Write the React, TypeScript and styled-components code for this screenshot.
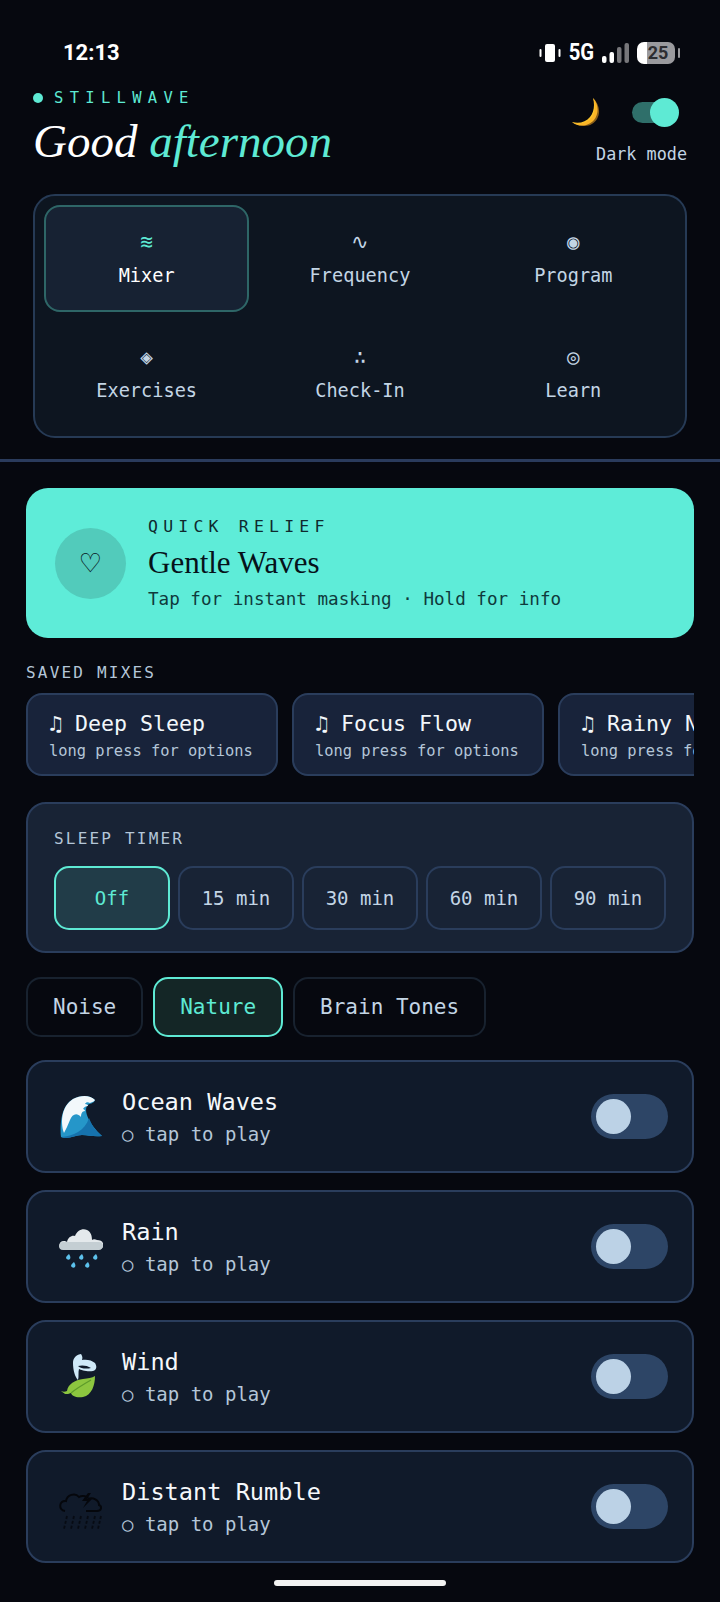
import React from "react";
import styled, { createGlobalStyle } from "styled-components";

const Global = createGlobalStyle`
  html, body { margin: 0; padding: 0; background: #06080f; }
  body { width: 720px; height: 1602px; overflow: hidden; font-family: "DejaVu Sans Mono", monospace; }
  * { box-sizing: border-box; }
`;

const Page = styled.div`
  position: relative;
  width: 720px;
  height: 1602px;
  overflow: hidden;
  background: #06080f;
  color: #fff;
`;

const StatusBar = styled.div`
  height: 88px;
  padding: 40px 40px 0 63px;
  display: flex;
  justify-content: space-between;
  align-items: flex-start;
`;
const Clock = styled.div`
  font-family: Roboto, sans-serif;
  font-weight: 700;
  font-size: 22px;
  line-height: 26px;
  color: #fff;
`;
const StatusIcons = styled.div`
  display: flex;
  align-items: center;
  height: 26px;
  gap: 7px;
`;
const FiveG = styled.span`
  font-family: Roboto, sans-serif;
  font-weight: 700;
  font-size: 23px;
  line-height: 26px;
  transform: scaleX(0.88);
  margin: 0 -1px;
`;
const Battery = styled.div`
  position: relative;
  width: 38px;
  height: 22px;
  border-radius: 7px;
  background: linear-gradient(90deg, #fff 0 27%, #9a9a9e 27% 100%);
  font-family: Roboto, sans-serif;
  font-weight: 700;
  font-size: 18px;
  line-height: 22px;
  color: #2c2c30;
  text-align: center;
  padding-left: 4px;
  margin-right: 5px;
  &::after {
    content: "";
    position: absolute;
    right: -5px;
    top: 6px;
    width: 2px;
    height: 10px;
    border-radius: 1px;
    background: #9a9a9e;
  }
`;

const Header = styled.header`
  height: 106px;
  padding: 0 33px;
  display: flex;
  justify-content: space-between;
`;
const BrandLine = styled.div`
  display: flex;
  align-items: center;
  height: 20px;
  gap: 11px;
  margin-left: 0;
  padding-left: 0;
`;
const Dot = styled.span`
  width: 10px;
  height: 10px;
  margin-left: 0;
  border-radius: 50%;
  background: #5eead4;
`;
const Brand = styled.span`
  font-size: 15.5px;
  letter-spacing: 6.3px;
  color: #5eead4;
`;
const Title = styled.h1`
  margin: 5px 0 0;
  font-family: "Liberation Serif", serif;
  font-weight: 400;
  font-style: italic;
  font-size: 47px;
  line-height: 56px;
  color: #fff;
  white-space: nowrap;
  em { color: #5eead4; font-style: italic; }
`;
const ModeColumn = styled.div`
  display: flex;
  flex-direction: column;
  align-items: flex-end;
  padding-top: 10px;
`;
const ModeRow = styled.div`
  display: flex;
  align-items: center;
  height: 29px;
  gap: 30px;
  padding-right: 8px;
`;
const ModeTrack = styled.div`
  position: relative;
  width: 34px;
  height: 21px;
  border-radius: 11px;
  background: #2f6f6a;
  margin-right: 13px;
`;
const ModeKnob = styled.span`
  position: absolute;
  top: -4px;
  left: 18px;
  width: 29px;
  height: 29px;
  border-radius: 50%;
  background: #5eead4;
`;
const ModeLabel = styled.div`
  margin-top: 15px;
  font-size: 16.8px;
  line-height: 24px;
  color: #c3d5e5;
`;

const Nav = styled.nav`
  margin: 0 33px 21px;
  padding: 9px;
  height: 244px;
  display: grid;
  grid-template-columns: repeat(3, 1fr);
  grid-auto-rows: 107px;
  row-gap: 8px;
  column-gap: 8px;
  background: #0d1520;
  border: 2px solid #263a55;
  border-radius: 22px;
`;
const NavItem = styled.div<{ $active?: boolean }>`
  display: flex;
  flex-direction: column;
  align-items: center;
  justify-content: center;
  gap: 9px;
  border-radius: 16px;
  border: 2.5px solid ${(p) => (p.$active ? "#2e6667" : "transparent")};
  background: ${(p) => (p.$active ? "#172233" : "transparent")};
  color: ${(p) => (p.$active ? "#fff" : "#c3d5e5")};
`;
const NavGlyph = styled.span<{ $active?: boolean }>`
  font-size: 21px;
  line-height: 26px;
  color: ${(p) => (p.$active ? "#5eead4" : "#c3d5e5")};
`;
const NavLabel = styled.span`
  font-size: 18.6px;
  line-height: 24px;
`;

const Divider = styled.div`
  height: 3px;
  background: #2a3b5c;
`;

const Content = styled.main`
  padding: 26px 26px 0;
  display: flex;
  flex-direction: column;
`;
const Relief = styled.section`
  height: 150px;
  border-radius: 22px;
  background: #5eecd8;
  padding: 0 29px;
  display: flex;
  align-items: center;
  gap: 22px;
  color: #06121a;
`;
const ReliefIcon = styled.div`
  width: 71px;
  height: 71px;
  border-radius: 50%;
  background: #52cbbb;
  display: flex;
  align-items: center;
  justify-content: center;
  font-size: 32px;
`;
const ReliefText = styled.div`
  display: flex;
  flex-direction: column;
`;
const ReliefKicker = styled.div`
  font-size: 16.5px;
  line-height: 22px;
  letter-spacing: 5.2px;
  color: #0f2a2e;
`;
const ReliefTitle = styled.div`
  font-family: "Liberation Serif", serif;
  font-size: 31px;
  line-height: 38px;
  margin-top: 6px;
  color: #06121a;
`;
const ReliefSub = styled.div`
  font-size: 17.6px;
  line-height: 24px;
  margin-top: 5px;
  color: #0f3a3c;
`;

const SectionLabel = styled.div`
  margin-top: 25px;
  font-size: 16px;
  line-height: 20px;
  letter-spacing: 2.2px;
  color: #b4c6d8;
`;
const ChipRow = styled.div`
  margin-top: 10px;
  display: flex;
  gap: 14px;
  overflow: hidden;
`;
const Chip = styled.div`
  flex: 0 0 252px;
  height: 83px;
  padding: 14px 21px;
  background: #18233a;
  border: 2px solid #2a3d5c;
  border-radius: 16px;
`;
const ChipTitle = styled.div`
  font-size: 21.6px;
  line-height: 30px;
  white-space: nowrap;
  color: #f2f7fb;
`;
const ChipSub = styled.div`
  font-size: 15.4px;
  line-height: 22px;
  margin-top: 1px;
  white-space: nowrap;
  color: #b4c6d8;
`;

const TimerPanel = styled.section`
  margin-top: 26px;
  height: 151px;
  padding: 25px 26px;
  background: #182335;
  border: 2px solid #2a3d5c;
  border-radius: 20px;
`;
const TimerLabel = styled.div`
  font-size: 16px;
  line-height: 20px;
  letter-spacing: 2.2px;
  color: #b4c6d8;
`;
const TimerRow = styled.div`
  margin-top: 17px;
  display: grid;
  grid-template-columns: repeat(5, 1fr);
  gap: 8px;
`;
const TimerButton = styled.div<{ $active?: boolean }>`
  height: 64px;
  display: flex;
  align-items: center;
  justify-content: center;
  font-size: 19px;
  border-radius: 15px;
  border: 2px solid ${(p) => (p.$active ? "#5eead4" : "#2a3d5c")};
  background: ${(p) => (p.$active ? "#213c48" : "transparent")};
  color: ${(p) => (p.$active ? "#5eead4" : "#c3d5e5")};
`;

const Tabs = styled.div`
  margin-top: 24px;
  display: flex;
  gap: 10px;
`;
const Tab = styled.div<{ $active?: boolean }>`
  height: 60px;
  padding: 0 25px;
  display: flex;
  align-items: center;
  font-size: 21px;
  border-radius: 15px;
  border: 2px solid ${(p) => (p.$active ? "#5eead4" : "#18222f")};
  background: ${(p) => (p.$active ? "#142626" : "transparent")};
  color: ${(p) => (p.$active ? "#5eead4" : "#c3d5e5")};
`;

const SoundList = styled.div`
  margin-top: 23px;
  display: flex;
  flex-direction: column;
  gap: 17px;
`;
const SoundRow = styled.div`
  height: 113px;
  padding: 0 24px 0 31px;
  display: flex;
  align-items: center;
  background: #101a2a;
  border: 2px solid #2a3d5c;
  border-radius: 20px;
`;
const SoundIcon = styled.div`
  width: 44px;
  height: 48px;
  flex: none;
  margin-right: 19px;
  svg { display: block; width: 100%; height: 100%; }
`;
const SoundText = styled.div`
  flex: 1;
  display: flex;
  flex-direction: column;
`;
const SoundName = styled.div`
  font-size: 23.6px;
  line-height: 32px;
  color: #f5f8fb;
`;
const SoundSub = styled.div`
  font-size: 19px;
  line-height: 26px;
  margin-top: 3px;
  color: #b4c6d8;
`;
const Switch = styled.div`
  position: relative;
  width: 77px;
  height: 45px;
  border-radius: 23px;
  background: #2d4566;
`;
const SwitchKnob = styled.span`
  position: absolute;
  left: 5px;
  top: 5px;
  width: 35px;
  height: 35px;
  border-radius: 50%;
  background: #bcd2e6;
`;

const HomeBar = styled.div`
  position: absolute;
  left: 274px;
  bottom: 16px;
  width: 172px;
  height: 6px;
  border-radius: 3px;
  background: #f2f2f2;
`;

const Wave = () => (
  <svg viewBox="0 0 44 48">
    <path d="M2 44C1 30 2 13 14 6c8-4 17-4 22 1-1 4-6 3-8 6-3 5 1 17 15 30-9 1-13-1-20-1-7 0-14 5-21 2z" fill="#2596c9" />
    <path d="M14 6c8-4 17-4 22 1-1 2-4 2-5 3-2-1-4-1-5 1 2 0 3 1 3 2-2 0-4 1-5 3 1 0 2 1 2 2-3 0-4 3-4 6-4-5-9-3-11 3-2 5-4 9-6 13C1 28 3 13 14 6z" fill="#f2f8fb" />
    <path d="M30 25c3 8 7 13 13 18-9 1-13-1-20-1-7 0-14 5-21 2 12-1 24-6 28-19z" fill="#1672ad" />
  </svg>
);
const RainCloud = () => (
  <svg viewBox="0 0 44 48">
    <path d="M4 26c-5 0-5-8 1-8 1 0 2 0 3 1 1-5 5-7 8-6 2-5 7-8 12-6 4 2 5 6 5 10 1-1 3-1 5 0 4 0 7 2 6 6 0 2-2 3-4 3z" fill="#e4e9ec" />
    <path d="M4 19h36c3 0 4 2 4 4s-2 4-4 4H4c-3 0-4-2-4-4s2-4 4-4z" fill="#c4ced3" />
    <g fill="#5cc1ec">
      <path d="M10 31c1 2 2 3 1 5-1 1-3 1-4-1 0-2 2-3 3-4z" />
      <path d="M23 31c1 2 2 3 1 5-1 1-3 1-4-1 0-2 2-3 3-4z" />
      <path d="M37 31c1 2 2 3 1 5-1 1-3 1-4-1 0-2 2-3 3-4z" />
      <path d="M15 39c1 2 2 3 1 5-1 1-3 1-4-1 0-2 2-3 3-4z" />
      <path d="M29 39c1 2 2 3 1 5-1 1-3 1-4-1 0-2 2-3 3-4z" />
    </g>
  </svg>
);
const WindLeaf = () => (
  <svg viewBox="0 0 44 48">
    <path d="M22 1c-6 1-8 5-8 9 0 7 2 14 5 17 1-3 0-8 1-11 2 1 8 3 14 2 4-1 4-5 2-8-3-3-9-4-13-3 1-3 0-4-1-6z" fill="#cfe9f8" />
    <path d="M19 13c3-1 9-1 13 2-4 1-10 1-13-2z" fill="#0f1a2a" />
    <path d="M8 38c1-7 8-11 16-12 5-1 9-1 12-3 0 9-3 19-12 21-7 1-11-1-12-4-2 1-4 1-6 1-1-1-3-2-4-3 2 1 4 1 6 0z" fill="#8cc63f" />
    <path d="M12 40c6-5 13-9 20-13" stroke="#5d9b2a" strokeWidth="1.2" fill="none" />
  </svg>
);
const Rumble = () => (
  <svg viewBox="0 0 44 48">
    <path d="M6 28c-7-1-6-11 1-10 1-6 9-9 13-4 3-2 7-1 9 1" fill="none" stroke="#05070c" strokeWidth="2" />
    <path d="M29 16c5-2 11 1 11 6 3 1 3 6-2 6H27" fill="none" stroke="#05070c" strokeWidth="2" />
    <path d="M29 10l-6 8h5l-4 7 9-9h-5l4-6z" fill="#05070c" />
    <g stroke="#05070c" strokeWidth="1.8" strokeDasharray="3 2" opacity="0.75">
      <path d="M8 33l-3 13M15 33l-3 13M22 33l-3 13M29 33l-3 13M36 33l-3 13M42 33l-3 13" />
    </g>
  </svg>
);
const Moon = () => (
  <svg width="30" height="29" viewBox="0 0 30 29">
    <path d="M21 0c6 6 6 16 1 22-5 6-15 8-22 2 7 2 14 0 18-5 4-5 5-12 3-19z" fill="#fcc62d" />
    <path d="M21 0c6 6 8 14 4 21-4 7-14 10-25 3 8 3 15 1 20-5 4-6 3-13 1-19z" fill="#f5a623" opacity="0.55" />
  </svg>
);
const Vibrate = () => (
  <svg width="22" height="22" viewBox="0 0 22 22" fill="#fff">
    <rect x="6" y="2" width="10" height="18" rx="2" />
    <rect x="0.5" y="7" width="2" height="8" rx="1" />
    <rect x="19.5" y="7" width="2" height="8" rx="1" />
  </svg>
);
const Signal = () => (
  <svg width="28" height="22" viewBox="0 0 28 22">
    <rect x="0" y="14" width="4.5" height="7" rx="2" fill="#fff" />
    <rect x="7.5" y="10" width="4.5" height="11" rx="2" fill="#fff" />
    <rect x="15" y="5" width="4.5" height="16" rx="2" fill="#77777b" />
    <rect x="22.5" y="1" width="4.5" height="20" rx="2" fill="#77777b" />
  </svg>
);

const navItems = [
  { glyph: "≋", label: "Mixer", active: true },
  { glyph: "∿", label: "Frequency" },
  { glyph: "◉", label: "Program" },
  { glyph: "◈", label: "Exercises" },
  { glyph: "∴", label: "Check-In" },
  { glyph: "◎", label: "Learn" },
];
const mixes = ["Deep Sleep", "Focus Flow", "Rainy Night"];
const timers = ["Off", "15 min", "30 min", "60 min", "90 min"];
const tabs = ["Noise", "Nature", "Brain Tones"];
const sounds = [
  { name: "Ocean Waves", Icon: Wave },
  { name: "Rain", Icon: RainCloud },
  { name: "Wind", Icon: WindLeaf },
  { name: "Distant Rumble", Icon: Rumble },
];

export default function App() {
  return (
    <Page>
      <Global />
      <StatusBar>
        <Clock>12:13</Clock>
        <StatusIcons>
          <Vibrate />
          <FiveG>5G</FiveG>
          <Signal />
          <Battery>25</Battery>
        </StatusIcons>
      </StatusBar>
      <Header>
        <div>
          <BrandLine>
            <Dot />
            <Brand>STILLWAVE</Brand>
          </BrandLine>
          <Title>
            Good <em>afternoon</em>
          </Title>
        </div>
        <ModeColumn>
          <ModeRow>
            <Moon />
            <ModeTrack>
              <ModeKnob />
            </ModeTrack>
          </ModeRow>
          <ModeLabel>Dark mode</ModeLabel>
        </ModeColumn>
      </Header>
      <Nav>
        {navItems.map((n) => (
          <NavItem key={n.label} $active={n.active}>
            <NavGlyph $active={n.active}>{n.glyph}</NavGlyph>
            <NavLabel>{n.label}</NavLabel>
          </NavItem>
        ))}
      </Nav>
      <Divider />
      <Content>
        <Relief>
          <ReliefIcon>♡</ReliefIcon>
          <ReliefText>
            <ReliefKicker>QUICK RELIEF</ReliefKicker>
            <ReliefTitle>Gentle Waves</ReliefTitle>
            <ReliefSub>Tap for instant masking · Hold for info</ReliefSub>
          </ReliefText>
        </Relief>
        <SectionLabel>SAVED MIXES</SectionLabel>
        <ChipRow>
          {mixes.map((m) => (
            <Chip key={m}>
              <ChipTitle>♫ {m}</ChipTitle>
              <ChipSub>long press for options</ChipSub>
            </Chip>
          ))}
        </ChipRow>
        <TimerPanel>
          <TimerLabel>SLEEP TIMER</TimerLabel>
          <TimerRow>
            {timers.map((t, i) => (
              <TimerButton key={t} $active={i === 0}>
                {t}
              </TimerButton>
            ))}
          </TimerRow>
        </TimerPanel>
        <Tabs>
          {tabs.map((t, i) => (
            <Tab key={t} $active={i === 1}>
              {t}
            </Tab>
          ))}
        </Tabs>
        <SoundList>
          {sounds.map(({ name, Icon }) => (
            <SoundRow key={name}>
              <SoundIcon>
                <Icon />
              </SoundIcon>
              <SoundText>
                <SoundName>{name}</SoundName>
                <SoundSub>○ tap to play</SoundSub>
              </SoundText>
              <Switch>
                <SwitchKnob />
              </Switch>
            </SoundRow>
          ))}
        </SoundList>
      </Content>
      <HomeBar />
    </Page>
  );
}
